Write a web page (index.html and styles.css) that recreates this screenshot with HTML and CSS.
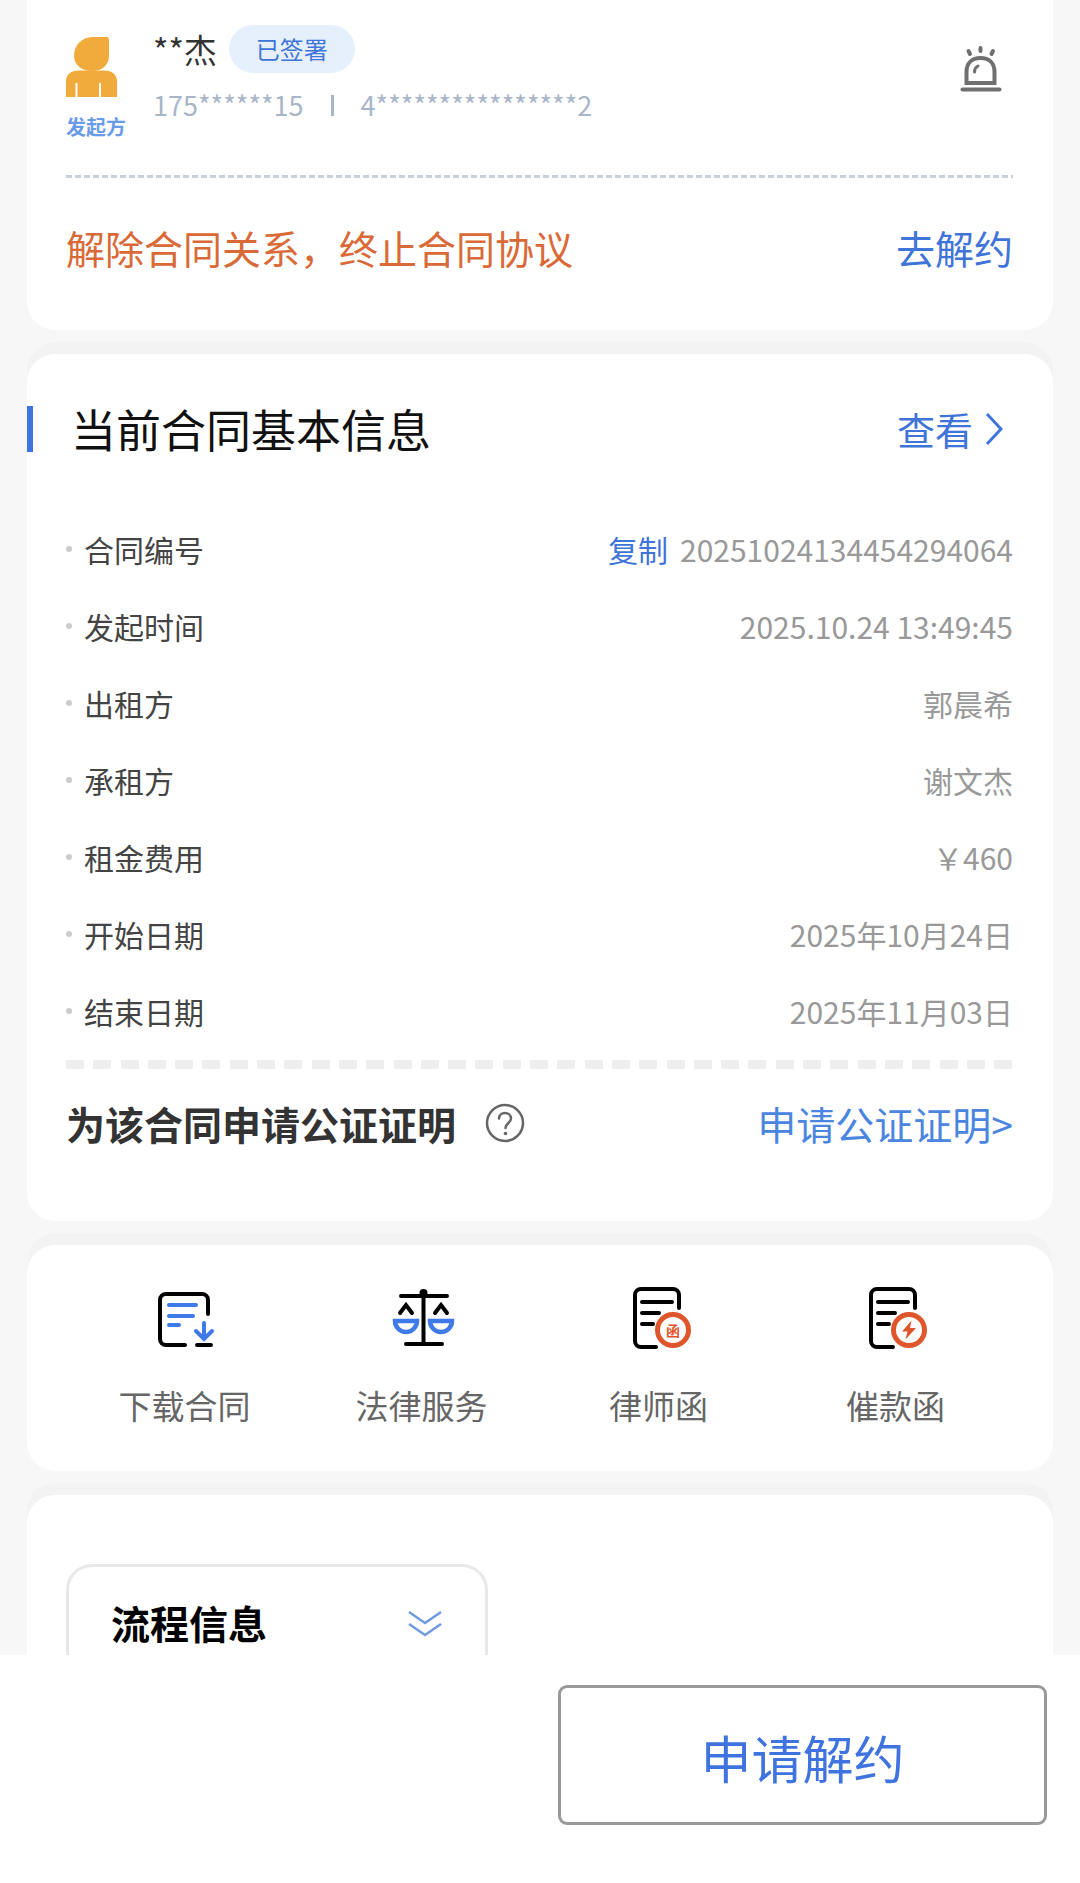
FILE: index.html
```html
<!DOCTYPE html>
<html lang="zh-CN">
<head>
<meta charset="utf-8">
<title>合同详情</title>
<link rel="stylesheet" href="styles.css">
</head>
<body>
<div class="page">
  <section class="card card-signer">
    <div class="signer">
      <div class="party">
        <svg class="avatar" viewBox="0 0 51 60" width="51" height="60">
          <path fill="#f0ab3c" d="M8 19C8 9 15 0 27 0H41Q43 0 43 4V19C43 28 36 34 26 34C16 34 8 28 8 19Z"/>
          <path fill="#f0ab3c" d="M0 60V44C0 37 6 33.500 12 33.500H39C45 33.500 51 37 51 44V60H35V46H33V60H11.500V46H9.500V60Z"/>
        </svg>
        <span class="party-label">发起方</span>
      </div>
      <div class="signer-info">
        <div class="name-row">
          <span class="name">**杰</span>
          <span class="badge">已签署</span>
        </div>
        <div class="ids">
          <span>175******15</span>
          <i class="ids-sep"></i>
          <span>4****************2</span>
        </div>
      </div>
      <svg class="alarm" viewBox="0 0 44 50" width="44" height="50" fill="none" stroke="#707070" stroke-linecap="round">
        <path stroke-width="4" d="M7.500 40V29C7.500 20 13 15 21.500 15S35.500 20 35.500 29V40Z"/>
        <path stroke-width="4" d="M3.500 46.500H40.500"/>
        <path stroke-width="3" d="M15.500 29C15.500 26 17 24 19 23"/>
        <path stroke-width="4" d="M21.500 5V8M9.500 8L11 11M34 8L32.500 11"/>
      </svg>
    </div>
    <div class="line-dash"></div>
    <div class="terminate">
      <span class="terminate-text">解除合同关系，终止合同协议</span>
      <a class="terminate-link">去解约</a>
    </div>
  </section>

  <section class="card card-info">
    <div class="info-head">
      <h2 class="info-title">当前合同基本信息</h2>
      <a class="info-view">查看
        <svg viewBox="0 0 18 34" width="18" height="34" fill="none" stroke="#3f74d8" stroke-width="3"><path d="M2 2L16 17L2 32"/></svg>
      </a>
    </div>
    <ul class="rows">
      <li class="row"><span class="row-label">合同编号</span><span class="row-value"><a class="copy">复制</a>20251024134454294064</span></li>
      <li class="row"><span class="row-label">发起时间</span><span class="row-value">2025.10.24 13:49:45</span></li>
      <li class="row"><span class="row-label">出租方</span><span class="row-value">郭晨希</span></li>
      <li class="row"><span class="row-label">承租方</span><span class="row-value">谢文杰</span></li>
      <li class="row"><span class="row-label">租金费用</span><span class="row-value">￥460</span></li>
      <li class="row"><span class="row-label">开始日期</span><span class="row-value">2025年10月24日</span></li>
      <li class="row"><span class="row-label">结束日期</span><span class="row-value">2025年11月03日</span></li>
    </ul>
    <div class="thick-dash"></div>
    <div class="notary">
      <strong class="notary-title">为该合同申请公证证明</strong>
      <svg class="help" viewBox="0 0 40 40" width="40" height="40" fill="none" stroke="#666" stroke-width="2.500">
        <circle cx="20" cy="20" r="18"/>
        <path stroke-linecap="round" d="M14 15.500C14 12 17 10 20 10S26 12 26 15.500C26 20 20.500 20 20.500 25"/>
        <circle cx="20.500" cy="30.500" r="1.800" fill="#666" stroke="none"/>
      </svg>
      <a class="notary-link">申请公证证明&gt;</a>
    </div>
  </section>

  <section class="card card-tools">
    <div class="tool">
      <svg viewBox="4 0 120 90" width="120" height="90" fill="none" stroke-linecap="round" stroke-width="4">
        <path stroke="#000" d="M87 44V30A6 6 0 0 0 81 24H45A6 6 0 0 0 39 30V69A6 6 0 0 0 45 75H64M76 75H90"/>
        <path stroke="#3f7ae8" d="M48 35H75M48 46H72M48 55H58M83 53V68M75 61L83 69L91 61"/>
      </svg>
      <span>下载合同</span>
    </div>
    <div class="tool">
      <svg viewBox="-9 0 120 90" width="120" height="90" fill="none" stroke-linecap="round" stroke-width="4">
        <circle cx="52.500" cy="23" r="4" fill="#000"/>
        <path stroke="#000" d="M30 26H76M52.500 24V73M35 74H71M29 43L35 35L41 43M64 43L70 35L76 43"/>
        <path stroke="#3f7ae8" stroke-width="4.500" d="M24 51H46A11 11 0 0 1 24 51ZM59 51H81A11 11 0 0 1 59 51Z"/>
      </svg>
      <span>法律服务</span>
    </div>
    <div class="tool">
      <svg viewBox="-12 0 120 90" width="120" height="90" fill="none" stroke-linecap="round" stroke-width="4">
        <path stroke="#000" d="M68 38V25A6 6 0 0 0 62 19H30A6 6 0 0 0 24 25V71A6 6 0 0 0 30 77H45M31 32H61M31 43H48M31 54H42"/>
        <circle cx="62" cy="60" r="15.500" fill="#fff" stroke="#e0562c" stroke-width="5"/>
        <text class="seal" x="62" y="65.500" text-anchor="middle">函</text>
      </svg>
      <span>律师函</span>
    </div>
    <div class="tool">
      <svg viewBox="-15 0 120 90" width="120" height="90" fill="none" stroke-linecap="round" stroke-width="4">
        <path stroke="#000" d="M64 38V25A6 6 0 0 0 58 19H26A6 6 0 0 0 20 25V71A6 6 0 0 0 26 77H42M27 32H57M27 43H44M27 54H38"/>
        <circle cx="58" cy="60" r="15.500" fill="#fff" stroke="#e0562c" stroke-width="5"/>
        <path fill="#e0562c" stroke="none" d="M60.500 50.500L51 61.500H56.500L54.500 69.500L65 58H59L60.500 50.500Z"/>
      </svg>
      <span>催款函</span>
    </div>
  </section>

  <section class="card card-flow">
    <div class="flow-box">
      <h3 class="flow-title">流程信息</h3>
      <svg class="flow-chevron" viewBox="0 0 34 28" width="34" height="28" fill="none" stroke="#6f9be2" stroke-width="2.500"><path d="M1 2L17 13L33 2M1 14L17 25L33 14"/></svg>
    </div>
  </section>

  <footer class="bottom-bar">
    <button class="apply">申请解约</button>
  </footer>
</div>
</body>
</html>
```

FILE: styles.css
```css
* { box-sizing: border-box; }
html, body { margin: 0; padding: 0; }
body { font-family: "Noto Sans CJK SC", "Noto Sans", sans-serif; color: #333; background: #f7f7f7; }
.page { position: relative; width: 1080px; height: 1883px; overflow: hidden; background: #f7f7f7; }
a { text-decoration: none; }
h2, h3, ul { margin: 0; padding: 0; font-weight: inherit; }
ul { list-style: none; }

.card { width: 1026px; margin: 24px 27px 0; background: #fff; border-radius: 28px; box-shadow: 0 -12px 0 #f3f3f3; }

.card-signer { height: 330px; margin-top: 0; padding: 0 40px 0 39px; border-radius: 0 0 28px 28px; box-shadow: none; }
.signer { display: flex; height: 175px; }
.party { width: 87px; padding-top: 37px; display: flex; flex-direction: column; align-items: flex-start; }
.avatar { display: block; }
.party-label { margin-top: 15px; font-size: 20px; line-height: 30px; font-weight: 700; color: #6a9be8; }
.signer-info { flex: 1; padding-top: 25px; }
.name-row { display: flex; align-items: center; height: 48px; gap: 12px; }
.name { font-size: 33px; line-height: 48px; color: #333; }
.badge { width: 126px; height: 48px; border-radius: 24px; background: #e6f0fc; color: #3f74d8; font-size: 24px; line-height: 48px; text-align: center; }
.ids { display: flex; align-items: center; margin-top: 14px; height: 36px; font-size: 27px; line-height: 36px; color: #a9b5c9; }
.ids-sep { width: 3px; height: 21px; margin: 0 27px; background: #a9b5c9; }
.alarm { margin: 43px 10px 0 0; }
.line-dash { height: 3px; background: repeating-linear-gradient(90deg, #c8d2dc 0 6px, transparent 6px 9px); }
.terminate { display: flex; justify-content: space-between; align-items: center; height: 137px; }
.terminate-text { font-size: 39px; line-height: 56px; color: #d96a38; }
.terminate-link { font-size: 39px; line-height: 56px; color: #3f74d8; }

.card-info { height: 867px; padding-top: 52px; }
.info-head { display: flex; justify-content: space-between; align-items: center; height: 46px; border-left: 6px solid #3f74e0; padding: 0 50px 0 38px; }
.info-title { font-size: 45px; line-height: 46px; color: #111; }
.info-view { display: flex; align-items: center; gap: 12px; font-size: 38px; line-height: 46px; color: #3f74d8; }
.rows { margin-top: 58px; }
.row { position: relative; display: flex; justify-content: space-between; align-items: center; height: 77px; padding: 0 40px 0 57px; }
.row::before { content: ""; position: absolute; left: 39px; top: 36px; width: 6px; height: 6px; border-radius: 50%; background: #ccc; }
.row-label { font-size: 30px; line-height: 44px; color: #444; }
.row-value { font-size: 30px; line-height: 44px; color: #999; }
.copy { margin-right: 12px; font-size: 30px; color: #3f74d8; }
.thick-dash { height: 9px; margin: 11px 40px 0 39px; background: repeating-linear-gradient(90deg, #eee 0 18px, transparent 18px 27.300px); }
.notary { display: flex; align-items: center; height: 60px; margin-top: 24px; padding: 0 40px 0 39px; }
.notary-title { font-size: 39px; line-height: 60px; font-weight: 700; color: #333; }
.help { margin-left: 29px; }
.notary-link { margin-left: auto; font-size: 39px; line-height: 60px; color: #4a86e0; }

.card-tools { height: 226px; padding: 25px 39px 0; display: grid; grid-template-columns: repeat(4, 1fr); }
.tool { display: flex; flex-direction: column; align-items: center; }
.tool span { margin-top: 22px; font-size: 33px; line-height: 46px; color: #666; }
.seal { font-size: 14px; font-weight: 700; fill: #e0562c; }

.card-flow { height: 420px; padding: 69px 0 0 39px; }
.flow-box { display: flex; justify-content: space-between; align-items: center; width: 422px; height: 260px; padding: 16px 43px 160px 42px; border: 3px solid #e8e8e8; border-radius: 26px; }
.flow-title { font-size: 39px; line-height: 56px; font-weight: 700; color: #000; }
.flow-chevron { margin-top: 4px; }

.bottom-bar { position: absolute; left: 0; right: 0; bottom: 0; height: 228px; padding: 30px 33px 0 0; display: flex; justify-content: flex-end; align-items: flex-start; background: #fff; }
.apply { width: 489px; height: 140px; padding: 4px 0 0; border: 3px solid #999; border-radius: 9px; background: #fff; color: #3f74e0; font-family: inherit; font-size: 51px; }
```
